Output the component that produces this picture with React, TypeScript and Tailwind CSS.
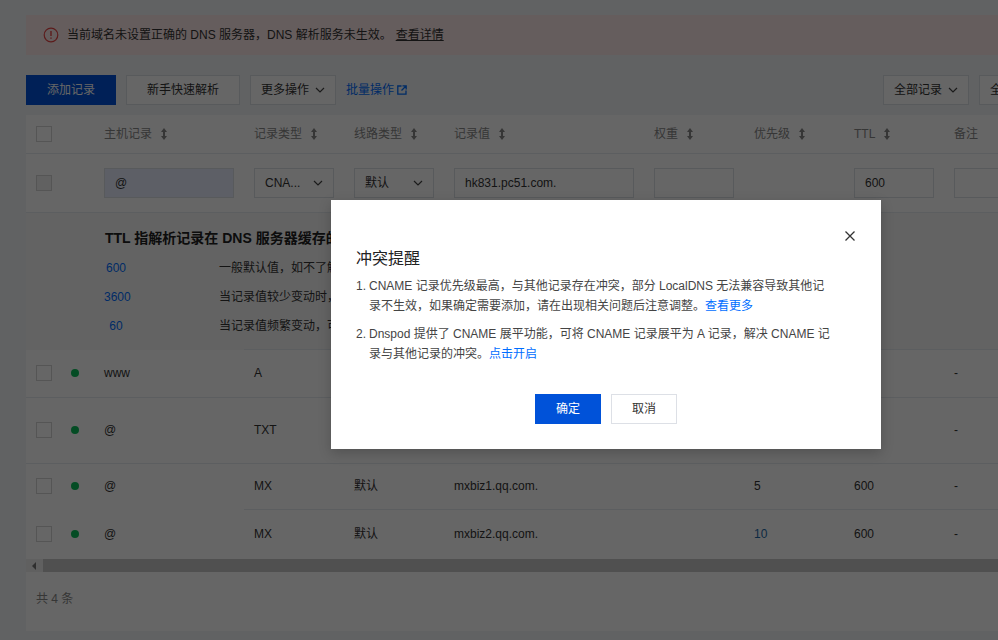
import React from "react";

const font = { fontFamily: '"Liberation Sans", "Noto Sans CJK SC", sans-serif' };

function Chevron({ className = "" }: { className?: string }) {
  return (
    <svg width="10" height="6" viewBox="0 0 10 6" fill="none" className={className}>
      <path d="M1 1l4 4 4-4" stroke="currentColor" strokeWidth="1.2" />
    </svg>
  );
}

function Sort() {
  return (
    <svg width="6" height="12" viewBox="0 0 6 12" className="ml-[9px] shrink-0 text-[#888]" fill="currentColor">
      <path d="M3 0l3 4H4v4h2l-3 4-3-4h2V4H0z" />
    </svg>
  );
}

function Box({ disabled = false }: { disabled?: boolean }) {
  return <div className={`w-4 h-4 border border-[#d5d5d5] ${disabled ? "bg-[#f2f2f2]" : "bg-white"}`} />;
}

function Dot() {
  return <div className="w-2 h-2 rounded-full bg-[#0abf5b] ml-[1px]" />;
}

const grid = "grid grid-cols-[78px_150px_100px_100px_200px_100px_100px_100px_160px] items-center";

function Head({ label, sort = true }: { label: string; sort?: boolean }) {
  return (
    <div className="flex items-center text-[#888]">
      {label}
      {sort && <Sort />}
    </div>
  );
}

function Row({
  host,
  type,
  line = "",
  value = "",
  prio = "",
  ttl = "",
  h,
  border = "border-b border-[#e7eaef]",
  prioClass = "",
}: {
  host: string;
  type: string;
  line?: string;
  value?: string;
  prio?: string;
  ttl?: string;
  h: string;
  border?: string;
  prioClass?: string;
}) {
  return (
    <div className={`${grid} ${h} ${border} bg-white text-[#333]`}>
      <div className="flex items-center pl-[10px] gap-[18px]">
        <Box />
        <Dot />
      </div>
      <div>{host}</div>
      <div>{type}</div>
      <div>{line}</div>
      <div>{value}</div>
      <div />
      <div className={prioClass}>{prio}</div>
      <div>{ttl}</div>
      <div>-</div>
    </div>
  );
}

function Select({ label }: { label: string }) {
  return (
    <div className="w-20 h-[30px] border border-[#dde0e6] bg-white flex items-center justify-between pl-[10px] pr-[10px] text-[#333]">
      <span>{label}</span>
      <Chevron className="text-[#444]" />
    </div>
  );
}

function Field({ label = "", w }: { label?: string; w: string }) {
  return <div className={`${w} h-[30px] border border-[#dde0e6] bg-white flex items-center pl-[10px] text-[#333]`}>{label}</div>;
}

function Ttl({ n, text }: { n: string; text: string }) {
  return (
    <div className="flex h-[29px] items-center">
      <div className="w-6 text-center text-[#006eff]">{n}</div>
      <div className="ml-[91px] text-[#333] whitespace-nowrap">{text}</div>
    </div>
  );
}

export default function App() {
  return (
    <div className="relative w-full h-[640px] overflow-hidden bg-[#f3f4f7] text-xs" style={font}>
      <div className="w-[1200px] pl-[26px] pt-[15px]">
        {/* alert */}
        <div className="h-10 bg-[#fde8e8] flex items-center pl-[17px] text-[#333]">
          <svg width="16" height="16" viewBox="0 0 16 16" fill="none" className="text-[#e54545] mr-[8px]">
            <circle cx="8" cy="8" r="6.8" stroke="currentColor" strokeWidth="1.2" />
            <path d="M8 4v5M8 10.4v1.4" stroke="currentColor" strokeWidth="1.4" />
          </svg>
          <span>当前域名未设置正确的 DNS 服务器，DNS 解析服务未生效。</span>
          <span className="ml-[4px] underline">查看详情</span>
        </div>

        {/* toolbar */}
        <div className="flex items-center mt-5 h-[30px]">
          <div className="w-[857px] flex items-center gap-[10px] shrink-0">
            <div className="w-[90px] h-[30px] bg-[#0052d9] text-white flex items-center justify-center">添加记录</div>
            <div className="w-[114px] h-[30px] bg-white border border-[#dde0e6] text-[#333] flex items-center justify-center">新手快速解析</div>
            <div className="w-[86px] h-[30px] bg-white border border-[#dde0e6] text-[#333] flex items-center justify-center gap-[6px]">
              更多操作 <Chevron className="text-[#444]" />
            </div>
            <div className="text-[#006eff] flex items-center gap-[3px]">
              批量操作
              <svg width="10" height="10" viewBox="0 0 10 10" fill="none" stroke="currentColor" strokeWidth="1.3">
                <path d="M4.5 1H.8v8.2H9V5.5M5.5.8h3.7v3.7M9 1L4.5 5.5" />
              </svg>
            </div>
          </div>
          <div className="flex items-center gap-[10px]">
            <div className="w-[86px] h-[30px] bg-white border border-[#dde0e6] text-[#333] flex items-center justify-center gap-[6px]">
              全部记录 <Chevron className="text-[#444]" />
            </div>
            <div className="w-[86px] h-[30px] bg-white border border-[#dde0e6] text-[#333] flex items-center justify-center gap-[6px]">
              全部记录 <Chevron className="text-[#444]" />
            </div>
          </div>
        </div>

        {/* table */}
        <div className="mt-[10px] bg-white">
          <div className={`${grid} h-[39px] border-b border-[#e7eaef] bg-white`}>
            <div className="pl-[10px]">
              <Box />
            </div>
            <Head label="主机记录" />
            <Head label="记录类型" />
            <Head label="线路类型" />
            <Head label="记录值" />
            <Head label="权重" />
            <Head label="优先级" />
            <Head label="TTL" />
            <Head label="备注" sort={false} />
          </div>

          <div className={`${grid} h-[59px] border-b border-[#e7eaef] bg-white`}>
            <div className="pl-[10px]">
              <Box disabled />
            </div>
            <div className="w-[130px] h-[30px] border border-[#dde0e6] bg-[#e8eeff] flex items-center pl-[10px] text-[#333]">@</div>
            <Select label="CNA..." />
            <Select label="默认" />
            <Field w="w-[180px]" label="hk831.pc51.com." />
            <Field w="w-20" />
            <div />
            <Field w="w-20" label="600" />
            <Field w="w-20" />
          </div>

          <div className="h-[136px] bg-[#f8f8f8] pl-[78px] pt-[16px]">
            <div className="font-bold text-sm text-[#222] leading-[18px] mb-[6px] pl-px whitespace-nowrap">
              TTL 指解析记录在 DNS 服务器缓存的生存时间
            </div>
            <Ttl n="600" text="一般默认值，如不了解" />
            <Ttl n="3600" text="当记录值较少变动时，" />
            <Ttl n="60" text="当记录值频繁变动，可" />
          </div>
          <div className="h-px bg-[#f8f8f8]">
            <div className="h-px ml-[218px] bg-[#e7eaef]" />
          </div>

          <Row host="www" type="A" h="h-[48px] pb-[2px]" />
          <Row host="@" type="TXT" h="h-[66px] pb-[2px]" />
          <Row host="@" type="MX" line="默认" value="mxbiz1.qq.com." prio="5" ttl="600" h="h-[45px] pb-px" border="" />
          <div className="h-px bg-white">
            <div className="h-px ml-[218px] bg-[#e7eaef]" />
          </div>
          <Row host="@" type="MX" line="默认" value="mxbiz2.qq.com." prio="10" ttl="600" h="h-[48px]" border="" prioClass="text-[#1e6aa8]" />

          {/* scrollbar */}
          <div className="h-[13px] mt-[1px] bg-[#f1f1f1] flex items-stretch">
            <div className="w-[17px] flex items-center justify-center pr-[1px]">
              <div className="w-0 h-0 border-y-[4px] border-y-transparent border-r-[4px] border-r-[#777]" />
            </div>
            <div className="flex-1 bg-[#c8c8c8]" />
          </div>

          {/* footer */}
          <div className="mt-[3px] h-[56px] bg-white pt-[16px] pl-[10px] leading-4 text-[#888]">共 4 条</div>
        </div>
      </div>

      {/* overlay */}
      <div className="absolute inset-0 bg-black/60" />

      {/* modal */}
      <div className="absolute left-[331px] top-[200px] w-[550px] h-[249px] bg-white shadow-[0_4px_12px_rgba(0,0,0,0.2)] px-[25px] pt-[47px] text-[#444]">
        <svg width="12" height="12" viewBox="0 0 12 12" className="absolute right-[25px] top-[30px] text-[#333]" fill="none" stroke="currentColor" strokeWidth="1.3">
          <path d="M1.5 1.5l9 9M10.5 1.5l-9 9" />
        </svg>
        <div className="text-base leading-6 font-normal text-[#222]">冲突提醒</div>
        <div className="mt-[5px] leading-5">
          <div className="flex">
            <span className="w-[13px] shrink-0">1.</span>
            <div className="w-[464px]">
              CNAME 记录优先级最高，与其他记录存在冲突，部分 LocalDNS 无法兼容导致其他记录不生效，如果确定需要添加，请在出现相关问题后注意调整。
              <span className="text-[#006eff]">查看更多</span>
            </div>
          </div>
          <div className="flex mt-2">
            <span className="w-[13px] shrink-0">2.</span>
            <div className="w-[464px]">
              Dnspod 提供了 CNAME 展平功能，可将 CNAME 记录展平为 A 记录，解决 CNAME 记录与其他记录的冲突。
              <span className="text-[#006eff]">点击开启</span>
            </div>
          </div>
        </div>
        <div className="absolute left-0 right-0 top-[194px] flex justify-center gap-[10px]">
          <div className="w-[66px] h-[30px] bg-[#0052d9] text-white flex items-center justify-center">确定</div>
          <div className="w-[66px] h-[30px] bg-white border border-[#dde0e6] text-[#333] flex items-center justify-center">取消</div>
        </div>
      </div>
    </div>
  );
}
